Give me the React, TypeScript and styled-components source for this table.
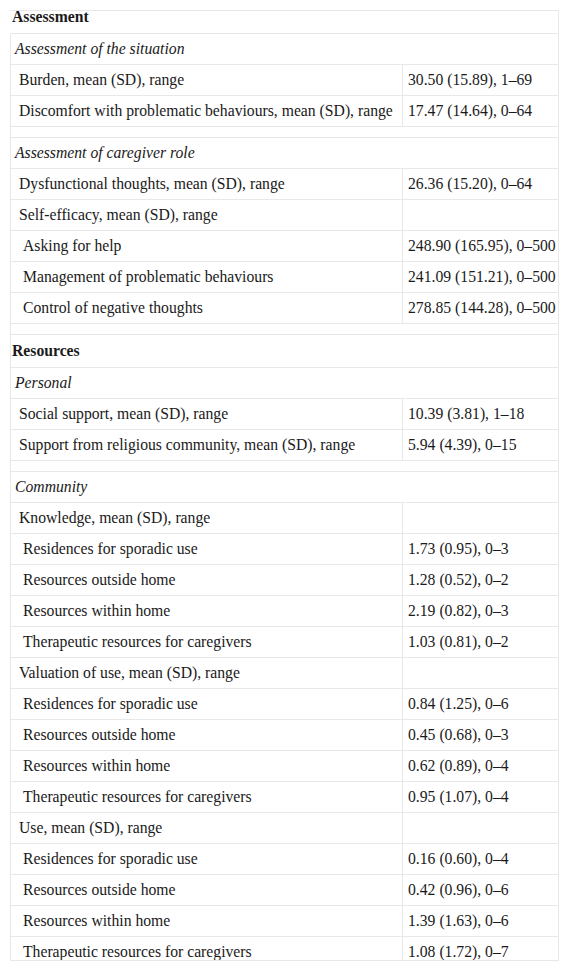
import React, { useLayoutEffect, useRef } from 'react';
import styled, { createGlobalStyle } from 'styled-components';

const GlobalStyle = createGlobalStyle`
  html, body {
    margin: 0;
    padding: 0;
    background: #fff;
  }
`;

const BORDER = '#e8e8e8';

const Frame = styled.div`
  margin: 10px 0 0 10px;
  width: 549px;
  height: 951px;
  box-sizing: border-box;
  border-top: 1px solid ${BORDER};
  border-bottom: 1px solid ${BORDER};
  overflow: hidden;
  font-family: 'Liberation Serif', 'Times New Roman', Times, serif;
  font-size: 15.7px;
  color: #1a1a1a;
`;

const Table = styled.div`
  display: flex;
  flex-direction: column;
`;

const Row = styled.div<{ $height?: number; $noLeft?: boolean }>`
  display: grid;
  grid-template-columns: 392px 1fr;
  height: ${(p) => p.$height ?? 31}px;
  box-sizing: border-box;
  border-left: 1px solid ${(p) => (p.$noLeft ? 'transparent' : BORDER)};
  border-right: 1px solid ${BORDER};
  border-bottom: 1px solid ${BORDER};
`;

const Label = styled.div<{ $indent: number }>`
  display: flex;
  align-items: center;
  padding-left: ${(p) => p.$indent}px;
  border-right: 1px solid ${BORDER};
  white-space: nowrap;
`;

const Value = styled.div`
  display: flex;
  align-items: center;
  padding-left: 5px;
  white-space: nowrap;
`;

const Span = styled.div<{ $kind: 'section' | 'group' }>`
  grid-column: 1 / -1;
  display: flex;
  align-items: center;
  padding-left: ${(p) => (p.$kind === 'section' ? 1 : 4)}px;
  font-weight: ${(p) => (p.$kind === 'section' ? 700 : 400)};
  font-style: ${(p) => (p.$kind === 'group' ? 'italic' : 'normal')};
`;

type Line =
  | { type: 'section'; text: string }
  | { type: 'group'; text: string }
  | { type: 'blank' }
  | { type: 'item'; text: string; value?: string; level: 1 | 2 };

const lines: Line[] = [
  { type: 'section', text: 'Assessment' },
  { type: 'group', text: 'Assessment of the situation' },
  { type: 'item', level: 1, text: 'Burden, mean (SD), range', value: '30.50 (15.89), 1–69' },
  { type: 'item', level: 1, text: 'Discomfort with problematic behaviours, mean (SD), range', value: '17.47 (14.64), 0–64' },
  { type: 'blank' },
  { type: 'group', text: 'Assessment of caregiver role' },
  { type: 'item', level: 1, text: 'Dysfunctional thoughts, mean (SD), range', value: '26.36 (15.20), 0–64' },
  { type: 'item', level: 1, text: 'Self-efficacy, mean (SD), range' },
  { type: 'item', level: 2, text: 'Asking for help', value: '248.90 (165.95), 0–500' },
  { type: 'item', level: 2, text: 'Management of problematic behaviours', value: '241.09 (151.21), 0–500' },
  { type: 'item', level: 2, text: 'Control of negative thoughts', value: '278.85 (144.28), 0–500' },
  { type: 'blank' },
  { type: 'section', text: 'Resources' },
  { type: 'group', text: 'Personal' },
  { type: 'item', level: 1, text: 'Social support, mean (SD), range', value: '10.39 (3.81), 1–18' },
  { type: 'item', level: 1, text: 'Support from religious community, mean (SD), range', value: '5.94 (4.39), 0–15' },
  { type: 'blank' },
  { type: 'group', text: 'Community' },
  { type: 'item', level: 1, text: 'Knowledge, mean (SD), range' },
  { type: 'item', level: 2, text: 'Residences for sporadic use', value: '1.73 (0.95), 0–3' },
  { type: 'item', level: 2, text: 'Resources outside home', value: '1.28 (0.52), 0–2' },
  { type: 'item', level: 2, text: 'Resources within home', value: '2.19 (0.82), 0–3' },
  { type: 'item', level: 2, text: 'Therapeutic resources for caregivers', value: '1.03 (0.81), 0–2' },
  { type: 'item', level: 1, text: 'Valuation of use, mean (SD), range' },
  { type: 'item', level: 2, text: 'Residences for sporadic use', value: '0.84 (1.25), 0–6' },
  { type: 'item', level: 2, text: 'Resources outside home', value: '0.45 (0.68), 0–3' },
  { type: 'item', level: 2, text: 'Resources within home', value: '0.62 (0.89), 0–4' },
  { type: 'item', level: 2, text: 'Therapeutic resources for caregivers', value: '0.95 (1.07), 0–4' },
  { type: 'item', level: 1, text: 'Use, mean (SD), range' },
  { type: 'item', level: 2, text: 'Residences for sporadic use', value: '0.16 (0.60), 0–4' },
  { type: 'item', level: 2, text: 'Resources outside home', value: '0.42 (0.96), 0–6' },
  { type: 'item', level: 2, text: 'Resources within home', value: '1.39 (1.63), 0–6' },
  { type: 'item', level: 2, text: 'Therapeutic resources for caregivers', value: '1.08 (1.72), 0–7' },
];

const App: React.FC = () => {
  const frameRef = useRef<HTMLDivElement>(null);

  // the view is scrolled a little into the table
  useLayoutEffect(() => {
    if (frameRef.current) frameRef.current.scrollTop = 10;
  }, []);

  return (
    <>
      <GlobalStyle />
      <Frame ref={frameRef}>
        <Table>
          {lines.map((line, i) => {
            if (line.type === 'blank') {
              return <Row key={i} $height={11} />;
            }
            if (line.type === 'section') {
              return (
                <Row key={i} $height={33} $noLeft={i === 0}>
                  <Span $kind="section">{line.text}</Span>
                </Row>
              );
            }
            if (line.type === 'group') {
              return (
                <Row key={i}>
                  <Span $kind="group">{line.text}</Span>
                </Row>
              );
            }
            return (
              <Row key={i}>
                <Label $indent={line.level === 1 ? 8 : 12}>{line.text}</Label>
                <Value>{line.value ?? ''}</Value>
              </Row>
            );
          })}
        </Table>
      </Frame>
    </>
  );
};

export default App;
